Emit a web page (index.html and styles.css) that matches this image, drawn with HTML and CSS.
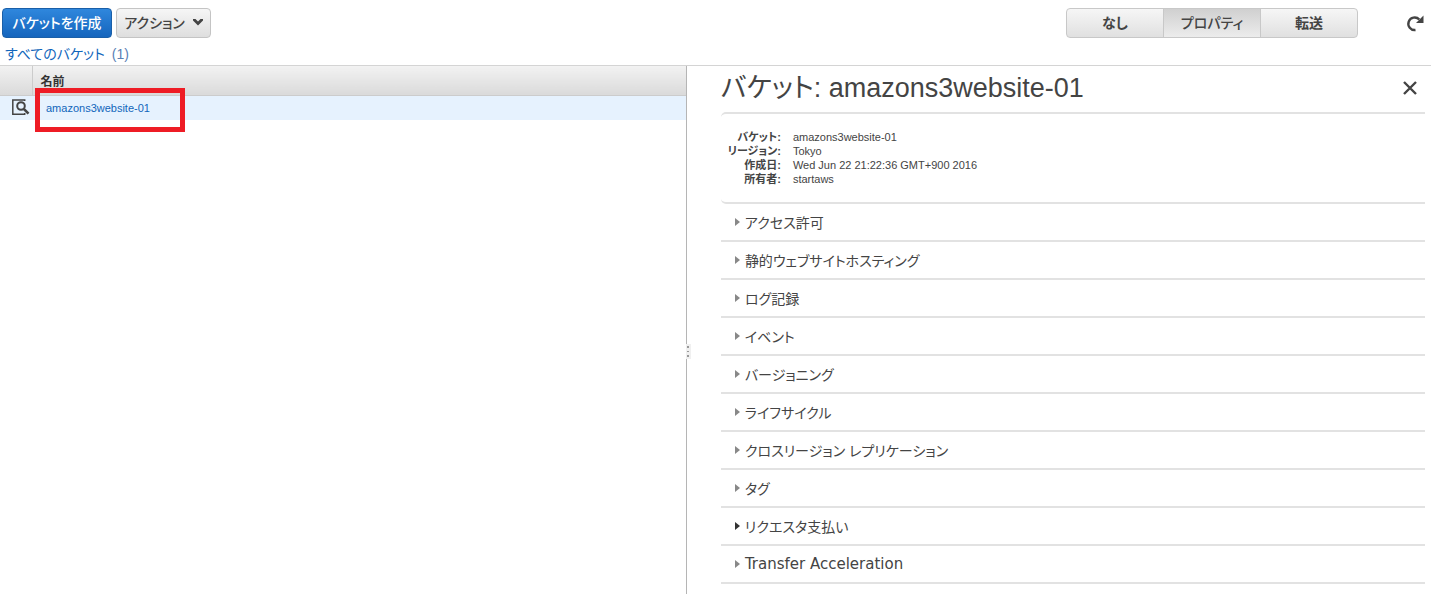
FILE: index.html
```html
<!DOCTYPE html>
<html lang="ja">
<head>
<meta charset="utf-8">
<title>S3 Management Console</title>
<link rel="stylesheet" href="styles.css">
</head>
<body>
<div class="console">
  <header class="toolbar">
    <div class="actions">
      <button type="button" class="btn btn-primary">バケットを作成</button>
      <button type="button" class="btn btn-menu">アクション
        <svg class="caret" viewBox="0 0 10 7" aria-hidden="true"><path d="M0 0h2.500L5 2.500 7.500 0H10v1.500L5 6.500 0 1.500z"/></svg>
      </button>
    </div>
    <div class="views">
      <button type="button" class="view">なし</button>
      <button type="button" class="view view-on">プロパティ</button>
      <button type="button" class="view">転送</button>
    </div>
    <button type="button" class="icon-btn" aria-label="更新">
      <svg class="refresh" viewBox="0 0 18 18" aria-hidden="true"><path class="arc" d="M9.500 16A6.300 6.300 0 1 1 13.300 5.500"/><path class="head" d="M17.500 1.500V9H10z"/></svg>
    </button>
  </header>
  <nav class="crumbs"><a href="#">すべてのバケット <span class="count">(1)</span></a></nav>
  <main class="panes">
    <section class="list">
      <table class="buckets">
        <thead><tr><th class="col-icon"></th><th class="col-name">名前</th></tr></thead>
        <tbody><tr>
          <td class="col-icon"><svg class="lookup" viewBox="0 0 18 17" aria-hidden="true"><path class="page" d="M12.700 2V1H.8v14.200H12.700V14"/><circle cx="9" cy="7" r="3.800"/><path class="handle" d="M12 10.200l4.500 4.500"/></svg></td>
          <td class="col-name"><a href="#">amazons3website-01</a><span class="marker"></span></td>
        </tr></tbody>
      </table>
      <span class="grip"><i></i><i></i><i></i></span>
    </section>
    <section class="details">
      <div class="title-row">
        <h1>バケット: amazons3website-01</h1>
        <button type="button" class="icon-btn" aria-label="閉じる">
          <svg class="close" viewBox="0 0 14 14" aria-hidden="true"><path d="M1 1l12 12M13 1 1 13"/></svg>
        </button>
      </div>
      <dl class="info">
        <dt>バケット:</dt><dd>amazons3website-01</dd>
        <dt>リージョン:</dt><dd>Tokyo</dd>
        <dt>作成日:</dt><dd>Wed Jun 22 21:22:36 GMT+900 2016</dd>
        <dt>所有者:</dt><dd>startaws</dd>
      </dl>
      <div class="sections">
        <button type="button" class="section">アクセス許可</button>
        <button type="button" class="section">静的ウェブサイトホスティング</button>
        <button type="button" class="section">ログ記録</button>
        <button type="button" class="section">イベント</button>
        <button type="button" class="section">バージョニング</button>
        <button type="button" class="section">ライフサイクル</button>
        <button type="button" class="section">クロスリージョン レプリケーション</button>
        <button type="button" class="section">タグ</button>
        <button type="button" class="section section-hot">リクエスタ支払い</button>
        <button type="button" class="section section-latin">Transfer Acceleration</button>
      </div>
    </section>
  </main>
</div>
</body>
</html>
```
FILE: styles.css
```css
* { box-sizing: border-box; }
body {
  margin: 0;
  background: #fff;
  color: #444;
  font-family: "Liberation Sans", "Noto Sans CJK JP", sans-serif;
  font-size: 12px;
  font-feature-settings: "palt";
}
button { font: inherit; font-feature-settings: inherit; color: inherit; cursor: pointer; }
a { color: #1166bb; text-decoration: none; }
.console { display: flex; flex-direction: column; height: 100vh; overflow: hidden; }
.toolbar { display: flex; align-items: center; height: 46px; padding: 0 7px 0 2px; }
.actions { display: flex; gap: 4px; flex: 1; }
.btn {
  display: flex;
  align-items: center;
  justify-content: center;
  gap: 8px;
  height: 30px;
  padding: 0 0 2px;
  border: 1px solid #c4c4c4;
  border-radius: 4px;
  font-size: 14px;
  font-weight: 500;
}
.btn-primary {
  width: 110px;
  border-color: #1a5fa8;
  background: linear-gradient(#2f87dd, #1565bd);
  color: #fff;
  font-weight: 500;
}
.btn-menu { width: 95px; background: linear-gradient(#f6f6f6, #dedede); }
.caret { width: 10px; height: 7px; fill: #444; }
.views { display: flex; margin-right: 48px; }
.view {
  width: 98px;
  height: 30px;
  margin-left: -1px;
  padding: 0 0 2px;
  border: 1px solid #c8c8c8;
  background: linear-gradient(#f6f6f6, #e0e0e0);
  font-size: 14px;
  font-weight: 700;
}
.view:first-child { border-radius: 4px 0 0 4px; }
.view:last-child { border-radius: 0 4px 4px 0; }
.view-on { background: linear-gradient(#d0d0d0, #ececec); font-weight: 500; }
.icon-btn { display: flex; padding: 0; border: 0; background: none; }
.refresh { width: 18px; height: 18px; }
.refresh .arc { fill: none; stroke: #444; stroke-width: 2.4; }
.refresh .head { fill: #444; }
.crumbs { height: 20px; padding-left: 5px; border-bottom: 1px solid #d4d4d4; font-size: 14px; line-height: 16px; }
.count { margin-left: 3px; color: #5a7fb5; }
.panes { display: flex; flex: 1; min-height: 0; }
.list { position: relative; width: 48%; border-right: 1px solid #b5b5b5; }
.buckets { width: 100%; border-collapse: collapse; table-layout: fixed; }
.buckets th { height: 29px; padding: 0; background: linear-gradient(#f2f2f2, #dadada); border-bottom: 1px solid #ccc; text-align: left; color: #333; }
.buckets td { height: 25px; padding: 0; background: #e6f2fe; font-size: 11px; }
.buckets .col-icon { width: 32px; }
.buckets th.col-icon { border-right: 1px solid #ccc; }
.buckets th.col-name { padding-left: 8px; }
.buckets td.col-name { position: relative; padding-left: 14px; }
.marker { position: absolute; left: 3px; top: -8px; width: 150px; height: 44px; border: 5px solid #ee1c25; pointer-events: none; }
.lookup { display: block; width: 18px; height: 17px; margin-left: 12px; fill: none; stroke: #444; stroke-width: 2; }
.lookup .page { stroke-width: 1.5; }
.lookup .handle { stroke-width: 2.6; }
.grip { position: absolute; right: -5px; top: 278px; display: flex; flex-direction: column; gap: 3px; width: 5px; height: 15px; padding: 2px 1px; background: #f0f0f0; }
.grip i { width: 2px; height: 2px; background: #999; }
.details { flex: 1; min-width: 0; padding: 0 6px 0 34px; }
.title-row { display: flex; align-items: center; justify-content: space-between; height: 46px; padding: 0 8px 3px 0; }
h1 { margin: 0; font-size: 27px; font-weight: 400; line-height: 40px; }
.close { width: 14px; height: 14px; fill: none; stroke: #444; stroke-width: 2.4; }
.info {
  display: grid;
  grid-template-columns: 60px 1fr;
  column-gap: 12px;
  margin: 0;
  padding: 16px 0;
  border-top: 2px solid #e2e2e2;
  border-bottom: 2px solid #e2e2e2;
  border-radius: 5px 0 0 5px;
  font-size: 11px;
  line-height: 14px;
}
.info dt { text-align: right; font-weight: 700; white-space: nowrap; }
.info dd { margin: 0; }
.sections { display: flex; flex-direction: column; }
.section {
  display: flex;
  align-items: center;
  gap: 5px;
  height: 38px;
  padding: 0 14px;
  border: 0;
  border-bottom: 2px solid #e2e2e2;
  background: none;
  font-size: 14px;
  text-align: left;
}
.section::before { content: ""; border: 4px solid transparent; border-left: 5px solid #888; border-right: 0; }
.section-hot::before { border-left-color: #333; }
.section-latin { font-family: "DejaVu Sans", sans-serif; font-size: 15px; }
```
